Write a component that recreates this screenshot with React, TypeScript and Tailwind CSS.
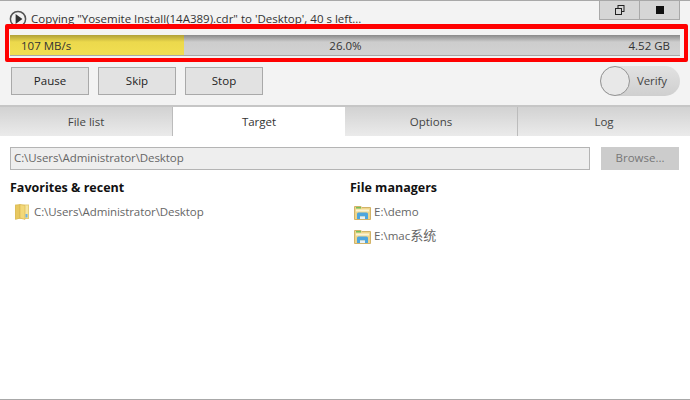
import React from "react";

const YellowFolder = () => (
  <svg width="14" height="16" viewBox="0 0 14 16" className="shrink-0">
    <rect x="0.5" y="1" width="13" height="13.5" fill="#f6e6a0" stroke="#e6cd78" />
    <path d="M0.5 1.5 L5 0.5 V14 L0.5 15.5 Z" fill="#e8c860" stroke="#d8b550" strokeWidth="0.6" />
    <path d="M5 0.5 L10 1.5 V15.5 L5 14 Z" fill="#f3d878" stroke="#d8b550" strokeWidth="0.6" />
    <rect x="10.5" y="10" width="2" height="3.5" fill="#6fb0e0" />
  </svg>
);

const BlueFolder = () => (
  <svg width="17" height="15" viewBox="0 0 17 15" className="shrink-0">
    <path d="M0.5 1.5 H7 L8 2.5 H16.5 V14.5 H0.5 Z" fill="#efd68c" stroke="#d2b368" />
    <rect x="2" y="2" width="5" height="1.5" fill="#74c05c" />
    <rect x="2" y="4.5" width="13" height="2" fill="#fbf3d4" />
    <path d="M3 14 V9 Q3 7.5 4.5 7.5 H12.5 Q14 7.5 14 9 V14 H11 V11.5 H6 V14 Z" fill="#4ea6de" />
    <rect x="6" y="11.5" width="5" height="2.5" fill="#e6f2fa" />
  </svg>
);

const Tab = ({ label, active }: { label: string; active?: boolean }) => (
  <div
    className={
      active
        ? "w-[172px] flex items-center justify-center bg-white text-[#333]"
        : "flex-1 flex items-center justify-center bg-gradient-to-b from-[#d2d2d2] to-[#ebebeb] border-r border-[#bcbcbc] last:border-r-0 text-[#444]"
    }
  >
    {label}
  </div>
);

const ActionButton = ({ label }: { label: string }) => (
  <button className="w-[78px] h-[28px] bg-[#e2e2e2] border border-[#a9a9a9] text-[#222]">{label}</button>
);

const App = () => {
  return (
    <div className="w-[690px] h-[400px] bg-white flex flex-col overflow-hidden font-['Open_Sans','Noto_Sans_CJK_SC',sans-serif] text-[11.5px] border-t border-b border-[#a8a8a8]">
      <div className="bg-[#f3f3f3] h-[104px] flex flex-col">
        <div className="h-[23px] flex justify-between">
          <div className="flex items-center gap-[4px] pl-[9px] pt-[13px] text-[#333]">
            <svg width="18" height="18" viewBox="0 0 18 18" className="shrink-0">
              <circle cx="9" cy="9" r="7.6" fill="none" stroke="#555" strokeWidth="1.5" />
              <path d="M6.6 4 L13.4 9 L6.6 14 Z" fill="#333" />
            </svg>
            <span className="whitespace-nowrap">Copying "Yosemite Install(14A389).cdr" to 'Desktop', 40 s left...</span>
          </div>
          <div className="flex h-[19px] mr-[10px] bg-[#d6d6d6] border border-t-0 border-[#a9a9a9]">
            <div className="w-[40px] flex items-center justify-center border-r border-[#a9a9a9]">
              <svg width="10" height="10" viewBox="0 0 10 10">
                <rect x="3" y="0.5" width="6" height="6" fill="none" stroke="#222" />
                <rect x="0.5" y="3.5" width="6" height="6" fill="#d6d6d6" stroke="#222" />
              </svg>
            </div>
            <div className="w-[39px] flex items-center justify-center">
              <div className="w-[8px] h-[8px] bg-[#111]"></div>
            </div>
          </div>
        </div>

        <div className="ml-[5px] w-[683px] h-[38px] border-[4px] border-t-[5px] border-[#ff0000] rounded-[2px] pt-[6px] pl-[1px] pr-[4px] bg-[#f3f3f3]">
          <div className="relative h-[21px] bg-gradient-to-b from-[#8a8a8a] via-[#cdcdcd] via-35% to-[#d2d2d2] border-b border-[#a9a9a9] grid grid-cols-3 items-center pt-[2px] pl-[11px] pr-[10px] text-[#333]">
            <div className="absolute left-0 top-0 bottom-0 w-[174px] bg-gradient-to-b from-[#b0a038] via-[#ecd94c] via-35% to-[#f1de52]"></div>
            <span className="relative">107 MB/s</span>
            <span className="relative text-center">26.0%</span>
            <span className="relative text-right">4.52 GB</span>
          </div>
        </div>

        <div className="flex items-center justify-between pl-[11px] pr-[10px] mt-[4px]">
          <div className="flex gap-[9px]">
            <ActionButton label="Pause" />
            <ActionButton label="Skip" />
            <ActionButton label="Stop" />
          </div>
          <div className="w-[80px] h-[30px] rounded-full bg-gradient-to-b from-[#e2e2e2] to-[#cfcfcf] flex items-center">
            <div className="w-[30px] h-[30px] rounded-full border-[1.5px] border-[#949494] bg-[#e8e8e8]"></div>
            <span className="ml-[7px] text-[#444] tracking-[-0.1px]">Verify</span>
          </div>
        </div>
      </div>

      <div className="h-[31px] flex border-t-2 border-[#c6c6c6]">
        <Tab label="File list" />
        <Tab label="Target" active />
        <Tab label="Options" />
        <Tab label="Log" />
      </div>

      <div className="flex-1 bg-white px-[10px] pt-[11px]">
        <div className="flex justify-between pr-[1px]">
          <div className="w-[580px] h-[23px] border border-[#b4b4b4] bg-[#eeeeee] flex items-center px-[3px] pb-[1px] text-[#666] tracking-[-0.08px]">
            C:\Users\Administrator\Desktop
          </div>
          <button className="w-[78px] h-[23px] bg-[#cccccc] pb-[1px] text-[#777]">Browse...</button>
        </div>
        <div className="flex mt-[9px]">
          <div className="w-[340px]">
            <h2 className="font-bold text-[12.5px] text-[#111] leading-[18px]">Favorites &amp; recent</h2>
            <div className="flex items-center gap-[5px] pl-[5px] mt-[3px] h-[24px] text-[#666] tracking-[-0.08px]">
              <YellowFolder />
              <span>C:\Users\Administrator\Desktop</span>
            </div>
          </div>
          <div>
            <h2 className="font-bold text-[12.5px] text-[#111] leading-[18px]">File managers</h2>
            <div className="flex items-center gap-[3px] pl-[4px] mt-[3px] h-[24px] text-[#666]">
              <BlueFolder />
              <span>E:\demo</span>
            </div>
            <div className="flex items-center gap-[3px] pl-[4px] h-[24px] text-[#666]">
              <BlueFolder />
              <span>E:\mac<span className="text-[13px]">系统</span></span>
            </div>
          </div>
        </div>
      </div>
    </div>
  );
};

export default App;
